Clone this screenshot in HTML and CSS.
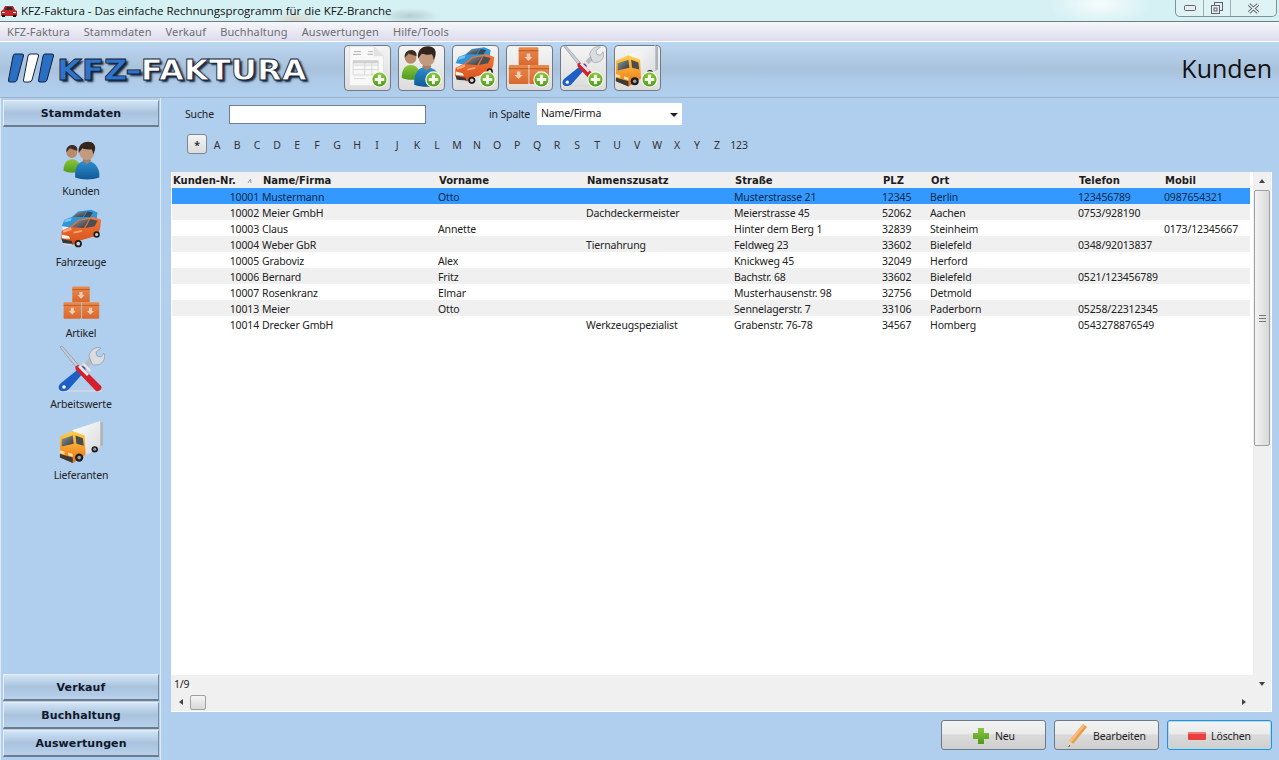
FILE: index.html
```html
<!DOCTYPE html>
<html lang="de">
<head>
    <meta charset="UTF-8">
    <title>KFZ-Faktura - Kunden</title>
    <link rel="stylesheet" href="styles.css">
</head>
<body>
    <svg class="defs" width="0" height="0">
        <defs>
            <linearGradient id="gBlue" x1="0" y1="0" x2="0" y2="1"><stop offset="0" stop-color="#2f8fd0"/><stop offset="1" stop-color="#0f5a96"/></linearGradient>
            <linearGradient id="gGreen" x1="0" y1="0" x2="0" y2="1"><stop offset="0" stop-color="#8cc63f"/><stop offset="1" stop-color="#4f9a1c"/></linearGradient>
            <linearGradient id="gOrange" x1="0" y1="0" x2="0" y2="1"><stop offset="0" stop-color="#f2793a"/><stop offset="1" stop-color="#d8501c"/></linearGradient>
            <linearGradient id="gCrate" x1="0" y1="0" x2="0" y2="1"><stop offset="0" stop-color="#e98a4e"/><stop offset="1" stop-color="#d9682c"/></linearGradient>
            <linearGradient id="gCab" x1="0" y1="0" x2="0" y2="1"><stop offset="0" stop-color="#fdd04a"/><stop offset=".5" stop-color="#f7a22e"/><stop offset="1" stop-color="#e8701c"/></linearGradient>
            <linearGradient id="gBox" x1="0" y1="0" x2="1" y2="1"><stop offset="0" stop-color="#fefefe"/><stop offset="1" stop-color="#d4d7da"/></linearGradient>
            <linearGradient id="gGlass" x1="0" y1="0" x2="1" y2="1"><stop offset="0" stop-color="#8d959c"/><stop offset="1" stop-color="#33373b"/></linearGradient>

            <symbol id="i-people" viewBox="0 0 48 48">
                <path d="M3 37c0-9 4-14 10-14s11 5 11 14c-6 3-15 3-21 0z" fill="url(#gGreen)"/>
                <circle cx="13" cy="15" r="6.500" fill="#b98a6c"/>
                <path d="M6.500 15c-1-6 3-9 7-9 4 0 7 3 6 7-3-1-7-2-9-3-1 2-3 3-4 5z" fill="#3f2d24"/>
                <path d="M17 45c-1-12 4-20 13-20s17 7 16 20c-8 3-21 3-29 0z" fill="url(#gBlue)"/>
                <path d="M26 25l5 4 5-4-1-3h-8z" fill="#a87f64"/>
                <circle cx="31" cy="15" r="9" fill="#c29a80"/>
                <path d="M21.500 16c-2-9 4-14 11-14 6 0 10 4 8 11-1 2-1 3-2 4 0-3-1-5-2-6-4 1-9 0-11-1-1 2-3 3-4 6z" fill="#33251e"/>
            </symbol>

            <symbol id="i-cars" viewBox="0 0 48 48">
                <path d="M3 21l3-7 8-3 7-6 14-2 7 3-1 8-24 9-10 1z" fill="#2f95d6"/>
                <path d="M15 11l6-5 9-1-4 6z" fill="url(#gGlass)"/>
                <path d="M31 5l6 1-3 5-7 0z" fill="#3a4650"/>
                <path d="M6 14l8-2-1 3-7 2z" fill="#7cc4ee"/>
                <path d="M3 21l8 1 3 2-9 1z" fill="#eef6fb"/>
                <path d="M2 34l1-8 10-5 8-7 17-3 8 3-1 9-3 8-21 6-4 4-12-2z" fill="url(#gOrange)"/>
                <path d="M14 22l8-7 11-2-6 10z" fill="url(#gGlass)"/>
                <path d="M34 13l8 2-3 6-10 2z" fill="#4a4f54"/>
                <path d="M4 26l9-4 1 3-9 3zM16 27l9-2 0 2-9 2z" fill="#f8a77c"/>
                <path d="M3 30l8 2 1 3-9-1z" fill="#f7f2ea"/>
                <path d="M3 35l11 2 1 4-11-2z" fill="#33363a"/>
                <path d="M5 40h9v2H7z" fill="#d8d8d8"/>
                <circle cx="21" cy="40" r="4" fill="#1e1e1e"/><circle cx="21" cy="40" r="2" fill="#d4d4d4"/>
                <circle cx="41" cy="30" r="3.500" fill="#1e1e1e"/><circle cx="41" cy="30" r="1.700" fill="#d4d4d4"/>
            </symbol>

            <symbol id="i-boxes" viewBox="0 0 48 48">
                <rect x="13" y="3" width="22" height="20" rx="1" fill="url(#gCrate)"/>
                <rect x="2" y="23" width="22" height="21" rx="1" fill="url(#gCrate)"/>
                <rect x="25" y="23" width="22" height="21" rx="1" fill="url(#gCrate)"/>
                <path d="M13 7h22M2 27h22M25 27h22" stroke="#b8531a" fill="none"/>
                <path d="M22 10h4v4h2.500L24 18.500 19.500 14H22zM11 30h4v4h2.500L13 38.500 8.500 34H11zM34 30h4v4h2.500L36 38.500 31.500 34H34z" fill="#f3cdb6"/>
            </symbol>

            <symbol id="i-tools" viewBox="0 0 48 48">
                <path d="M3 46h42" stroke="#d5d8dc" stroke-width="1.500"/>
                <path d="M3 2l2-1 20 23-3 2z" fill="#c9ced4" stroke="#7f8790" stroke-width=".6"/>
                <path d="M35 14L20 30" stroke="#b9bec4" stroke-width="5"/>
                <path d="M32 11c1-6 7-10 12-8l-5 4 1 4 4 1 3-4c2 5-1 12-8 12-2 0-3 0-4-1z" fill="#d9dde1" stroke="#858c94" stroke-width=".6"/>
                <path d="M24 22c2-2 6 1 4 4L12 44c-3 3-9 3-10 0-1-2 0-4 2-6z" fill="#1f5fc4"/>
                <circle cx="7" cy="42" r="1.800" fill="#fff"/>
                <path d="M19 25c-2-3 1-6 4-4l2 1 19 19c2 3-2 6-5 5l-2-2z" fill="#d5202c"/>
                <path d="M21 22l9 9 2-2-9-9zM25 19l8 8 1-2-7-7z" fill="#f3e6e6"/>
            </symbol>

            <symbol id="i-truck" viewBox="0 0 48 48">
                <path d="M15 11L45 1l3 2v25L28 39l-13-9z" fill="url(#gBox)"/>
                <path d="M45 1l3 2v25l-3 1.500z" fill="#b0b4b8"/>
                <circle cx="39" cy="32" r="3.500" fill="#1e1e1e"/><circle cx="39" cy="32" r="1.600" fill="#a0a0a0"/>
                <path d="M1 18l14-6 13 5 1 21-14 9-14-6z" fill="url(#gCab)"/>
                <path d="M3 21l12-4 1 9-13 3z" fill="url(#gGlass)"/>
                <path d="M18 17l8 3 1 8-8-2z" fill="#4a4d50"/>
                <path d="M1 33l5 1.500v3L1 36zM10 35.500l5 1.500v3l-5-1.500z" fill="#ffe6a0"/>
                <path d="M1 37l14 4v6L1 41z" fill="#3a3a3a"/>
                <circle cx="22" cy="41" r="4.500" fill="#1e1e1e"/><circle cx="22" cy="41" r="2" fill="#a0a0a0"/>
            </symbol>

            <symbol id="i-doc" viewBox="0 0 48 48">
                <path d="M5 2h27l11 11v33H5z" fill="#f8f8f8" stroke="#e0e0e0"/>
                <path d="M32 2l11 11H32z" fill="#e2e2e2"/>
                <path d="M10 8h8M26 8h5M9 11h9M25 11h6" stroke="#a8a8a8"/>
                <path d="M9 18h28v16H9zM9 23h28M9 28h28M22 18v16M30 18v16" stroke="#d6d6d6" fill="none"/>
                <rect x="9" y="18" width="28" height="3" fill="#d0d0d0"/>
                <path d="M10 38h13" stroke="#dadada"/>
            </symbol>

            <symbol id="i-badge" viewBox="0 0 16 16">
                <circle cx="8" cy="8" r="7.800" fill="#f4f8ee"/>
                <circle cx="8" cy="8" r="6.600" fill="url(#gGreen)"/>
                <path d="M6.500 3.500h3v3h3v3h-3v3h-3v-3h-3v-3h3z" fill="#f2f8ea"/>
            </symbol>
        </defs>
    </svg>

    <div class="titlebar">
        <svg class="title-icon" width="16" height="12" viewBox="0 0 16 12"><path d="M0 6l2-1 2-4h8l2 4 2 1v5H0z" fill="#c0272d"/><path d="M4 5l1.500-3h5L12 5z" fill="#2b2b2b"/><rect x="1" y="10" width="3" height="2" fill="#111"/><rect x="12" y="10" width="3" height="2" fill="#111"/><path d="M1 7h3v1H1zM12 7h3v1h-3z" fill="#ffe9a8"/></svg>
        <span class="title-text">KFZ-Faktura - Das einfache Rechnungsprogramm für die KFZ-Branche</span>
        <div class="win-controls">
            <div class="win-btn win-min"><svg width="12" height="6" viewBox="0 0 12 6"><rect x=".5" y=".5" width="11" height="5" rx="1" fill="#e8eef0" stroke="#5b6670"/></svg></div>
            <div class="win-btn win-max"><svg width="12" height="12" viewBox="0 0 12 12"><rect x="3.500" y=".5" width="8" height="8" fill="#e8eef0" stroke="#5b6670"/><rect x=".5" y="3.500" width="8" height="8" fill="#e8eef0" stroke="#5b6670"/><rect x="3" y="6" width="3" height="3" fill="none" stroke="#5b6670"/></svg></div>
            <div class="win-btn win-close"><svg width="13" height="11" viewBox="0 0 13 11"><path d="M2 1.500L11 9.500M11 1.500L2 9.500" stroke="#5b6670" stroke-width="3.400"/><path d="M2 1.500L11 9.500M11 1.500L2 9.500" stroke="#eef2f4" stroke-width="1.600"/></svg></div>
        </div>
    </div>

    <div class="menubar">
        <span>KFZ-Faktura</span>
        <span>Stammdaten</span>
        <span>Verkauf</span>
        <span>Buchhaltung</span>
        <span>Auswertungen</span>
        <span>Hilfe/Tools</span>
    </div>

    <div class="toolbar">
        <div class="logo">
            <svg class="logo-stripes" width="46" height="30" viewBox="0 0 46 30">
                <path d="M7 1h7q2 0 1.500 2L9 27q-.5 2-3 2H2q-2 0-1.500-2L5 3q.5-2 2-2z" fill="#2b6fc4" stroke="#10233f"/>
                <path d="M22 1h7q2 0 1.500 2L24 27q-.5 2-3 2h-4q-2 0-1.500-2L20 3q.5-2 2-2z" fill="#fff" stroke="#10233f"/>
                <path d="M37 1h7q2 0 1.500 2L39 27q-.5 2-3 2h-4q-2 0-1.500-2L35 3q.5-2 2-2z" fill="#2b6fc4" stroke="#10233f"/>
            </svg>
            <div class="logo-text"><span class="logo-blue">KFZ<span class="logo-dash">-</span></span><span class="logo-white">FAKTURA</span></div>
        </div>
        <div class="tool-buttons">
            <div class="tool-btn"><svg class="tool-icon" width="44" height="44"><use href="#i-doc"/></svg><svg class="tool-badge" width="17" height="17"><use href="#i-badge"/></svg></div>
            <div class="tool-btn"><svg class="tool-icon" width="44" height="44"><use href="#i-people"/></svg><svg class="tool-badge" width="17" height="17"><use href="#i-badge"/></svg></div>
            <div class="tool-btn"><svg class="tool-icon" width="44" height="44"><use href="#i-cars"/></svg><svg class="tool-badge" width="17" height="17"><use href="#i-badge"/></svg></div>
            <div class="tool-btn"><svg class="tool-icon" width="44" height="44"><use href="#i-boxes"/></svg><svg class="tool-badge" width="17" height="17"><use href="#i-badge"/></svg></div>
            <div class="tool-btn"><svg class="tool-icon" width="44" height="44"><use href="#i-tools"/></svg><svg class="tool-badge" width="17" height="17"><use href="#i-badge"/></svg></div>
            <div class="tool-btn"><svg class="tool-icon" width="44" height="44"><use href="#i-truck"/></svg><svg class="tool-badge" width="17" height="17"><use href="#i-badge"/></svg></div>
        </div>
        <div class="page-title">Kunden</div>
    </div>

    <div class="content">
        <div class="sidebar">
            <div class="side-head">Stammdaten</div>
            <div class="side-items">
                <div class="side-item"><svg width="40" height="40"><use href="#i-people"/></svg><span>Kunden</span></div>
                <div class="side-item"><svg width="44" height="44"><use href="#i-cars"/></svg><span>Fahrzeuge</span></div>
                <div class="side-item"><svg width="38" height="38"><use href="#i-boxes"/></svg><span>Artikel</span></div>
                <div class="side-item"><svg width="48" height="48"><use href="#i-tools"/></svg><span>Arbeitswerte</span></div>
                <div class="side-item"><svg width="44" height="44"><use href="#i-truck"/></svg><span>Lieferanten</span></div>
            </div>
            <div class="side-head">Verkauf</div>
            <div class="side-head">Buchhaltung</div>
            <div class="side-head">Auswertungen</div>
        </div>

        <div class="main">
            <div class="search-row">
                <label class="search-label">Suche</label>
                <input class="search-input" type="text">
                <label class="column-label">in Spalte</label>
                <div class="column-select">Name/Firma<span class="select-arrow"></span></div>
            </div>

            <div class="alpha-row">
                <span class="alpha-all">*</span>
                <span>A</span><span>B</span><span>C</span><span>D</span><span>E</span><span>F</span><span>G</span><span>H</span><span>I</span><span>J</span><span>K</span><span>L</span><span>M</span><span>N</span><span>O</span><span>P</span><span>Q</span><span>R</span><span>S</span><span>T</span><span>U</span><span>V</span><span>W</span><span>X</span><span>Y</span><span>Z</span><span class="alpha-num">123</span>
            </div>

            <div class="panel">
                <div class="panel-top">
                    <div class="table-wrap">
                        <table class="grid">
                            <colgroup>
                                <col class="c-nr"><col class="c-name"><col class="c-first"><col class="c-extra"><col class="c-street"><col class="c-zip"><col class="c-city"><col class="c-phone"><col class="c-mobile">
                            </colgroup>
                            <thead>
                                <tr>
                                    <th class="th-nr">Kunden-Nr.<svg class="sort-mark" width="5" height="6" viewBox="0 0 5 6"><path d="M1 5L3.500 1l.5 4" fill="none" stroke="#9a9a9a"/></svg></th>
                                    <th>Name/Firma</th><th>Vorname</th><th>Namenszusatz</th><th>Straße</th><th>PLZ</th><th>Ort</th><th>Telefon</th><th>Mobil</th>
                                </tr>
                            </thead>
                            <tbody>
                                <tr class="selected"><td class="nr">10001</td><td>Mustermann</td><td>Otto</td><td></td><td>Musterstrasse 21</td><td>12345</td><td>Berlin</td><td>123456789</td><td>0987654321</td></tr>
                                <tr class="alt"><td class="nr">10002</td><td>Meier GmbH</td><td></td><td>Dachdeckermeister</td><td>Meierstrasse 45</td><td>52062</td><td>Aachen</td><td>0753/928190</td><td></td></tr>
                                <tr><td class="nr">10003</td><td>Claus</td><td>Annette</td><td></td><td>Hinter dem Berg 1</td><td>32839</td><td>Steinheim</td><td></td><td>0173/12345667</td></tr>
                                <tr class="alt"><td class="nr">10004</td><td>Weber GbR</td><td></td><td>Tiernahrung</td><td>Feldweg 23</td><td>33602</td><td>Bielefeld</td><td>0348/92013837</td><td></td></tr>
                                <tr><td class="nr">10005</td><td>Graboviz</td><td>Alex</td><td></td><td>Knickweg 45</td><td>32049</td><td>Herford</td><td></td><td></td></tr>
                                <tr class="alt"><td class="nr">10006</td><td>Bernard</td><td>Fritz</td><td></td><td>Bachstr. 68</td><td>33602</td><td>Bielefeld</td><td>0521/123456789</td><td></td></tr>
                                <tr><td class="nr">10007</td><td>Rosenkranz</td><td>Elmar</td><td></td><td>Musterhausenstr. 98</td><td>32756</td><td>Detmold</td><td></td><td></td></tr>
                                <tr class="alt"><td class="nr">10013</td><td>Meier</td><td>Otto</td><td></td><td>Sennelagerstr. 7</td><td>33106</td><td>Paderborn</td><td>05258/22312345</td><td></td></tr>
                                <tr><td class="nr">10014</td><td>Drecker GmbH</td><td></td><td>Werkzeugspezialist</td><td>Grabenstr. 76-78</td><td>34567</td><td>Homberg</td><td>0543278876549</td><td></td></tr>
                            </tbody>
                        </table>
                        <div class="count-row">1/9</div>
                    </div>
                    <div class="vscroll">
                        <div class="scroll-arrow arrow-up"></div>
                        <div class="vthumb"><span class="grip"></span></div>
                        <div class="vspace"></div>
                        <div class="scroll-arrow arrow-down"></div>
                    </div>
                </div>
                <div class="hscroll">
                    <div class="scroll-arrow arrow-left"></div>
                    <div class="hthumb"></div>
                    <div class="hspace"></div>
                    <div class="scroll-arrow arrow-right"></div>
                </div>
            </div>

            <div class="actions">
                <button class="action">
                    <svg width="18" height="18" viewBox="0 0 18 18"><path d="M6 1h6v5h5v6h-5v5H6v-5H1V6h5z" fill="url(#gGreen)"/></svg>Neu
                </button>
                <button class="action">
                    <svg width="21" height="25" viewBox="0 0 21 25"><path d="M16 1l4 3L6 21l-4-3z" fill="#eb9a45"/><path d="M16 1l2 1.500L4 20l-2-2z" fill="#f6bd7c"/><path d="M2 18l4 3-5 3z" fill="#e9d5b8"/><path d="M1 24l1.500-2 1 1z" fill="#333"/></svg>Bearbeiten
                </button>
                <button class="action action-focus">
                    <svg width="18" height="8" viewBox="0 0 18 8"><rect width="18" height="8" rx="1" fill="#e84040"/><rect width="18" height="2" fill="#f47a7a"/></svg>Löschen
                </button>
            </div>
        </div>
    </div>
</body>
</html>
```
FILE: styles.css
```css
* {
    box-sizing: border-box;
}

html, body {
    margin: 0;
    height: 100%;
    overflow: hidden;
}

body {
    display: flex;
    flex-direction: column;
    font-family: "Noto Sans", sans-serif;
    font-size: 10.5px;
    letter-spacing: -0.15px;
    color: #222;
    background: #b0cfee;
}

.defs {
    display: block;
    height: 0;
}

/* window frame */
.titlebar {
    height: 22px;
    display: flex;
    align-items: center;
    padding-left: 1px;
    border-bottom: 1px solid #6f7d80;
    background:
        radial-gradient(ellipse 24px 8px at 295px 20px, rgba(230, 140, 110, 0.3), transparent),
        radial-gradient(ellipse 30px 8px at 410px 16px, rgba(110, 120, 130, 0.3), transparent),
        radial-gradient(ellipse 50px 20px at 1100px 4px, rgba(255, 255, 255, 0.8), transparent),
        #d6f1f4;
}

.title-icon {
    margin-right: 4px;
}

.title-text {
    font-family: "Open Sans", sans-serif;
    font-size: 11.5px;
    letter-spacing: 0;
    color: #111;
}

.win-controls {
    margin-left: auto;
    margin-right: 2px;
    margin-bottom: 4px;
    width: 102px;
    height: 17px;
    display: flex;
    border: 1px solid #7e9193;
    border-top: none;
    border-radius: 0 0 5px 5px;
    background: #dff3f5;
}

.win-btn {
    display: flex;
    align-items: center;
    justify-content: center;
}

.win-min {
    width: 28px;
    border-right: 1px solid #9fb0b2;
}

.win-max {
    width: 27px;
    border-right: 1px solid #9fb0b2;
}

.win-close {
    flex: 1;
}

.menubar {
    height: 20px;
    display: flex;
    align-items: center;
    gap: 14px;
    padding-left: 7px;
    font-size: 11px;
    letter-spacing: 0.12px;
    color: #6e6e6e;
    background: linear-gradient(#f6f6fa, #dcdcee);
    border-bottom: 1px solid #fff;
}

.toolbar {
    height: 56px;
    flex: none;
    display: flex;
    align-items: center;
    padding: 0 7px 4px 8px;
    border-bottom: 1px solid #9fb3c7;
    background: linear-gradient(#bcd7f2 0%, #a9c2dc 50%, #aecbe9 70%, #b0cfee 100%);
}

/* logo */
.logo {
    width: 336px;
    display: flex;
    align-items: center;
    gap: 3px;
}

.logo-text {
    margin-top: 5px;
    font-family: "DejaVu Sans", sans-serif;
    font-size: 29px;
    font-weight: bold;
    letter-spacing: 0;
    line-height: 30px;
    white-space: nowrap;
    text-shadow: 2px 2px 2px #12233a;
    -webkit-text-stroke: 0.8px #12233a;
    transform: scaleX(1.11);
    transform-origin: left center;
}

.logo-blue {
    color: #2f74cc;
}

.logo-white {
    color: #fff;
}

.logo-dash {
    display: inline-block;
    transform: scaleX(1.3);
}

.tool-buttons {
    display: flex;
    gap: 7px;
}

.tool-btn {
    position: relative;
    width: 47px;
    height: 46px;
    display: flex;
    align-items: center;
    justify-content: center;
    border: 1px solid #6f7a86;
    border-radius: 4px;
    background: linear-gradient(#f4f4f4, #dcdcdc);
}

.tool-icon {
    margin: -3px 2px 0 0;
}

.tool-badge {
    position: absolute;
    right: 2px;
    bottom: 2px;
}

.page-title {
    margin-left: auto;
    font-family: "Open Sans", sans-serif;
    font-size: 25px;
    letter-spacing: 0;
    color: #111;
}

/* content */
.content {
    flex: 1;
    display: flex;
    min-height: 0;
}

.sidebar {
    width: 161px;
    display: flex;
    flex-direction: column;
    gap: 1px;
    padding: 2px 1px 3px 2px;
    border-right: 1px solid #dfe9f3;
    border-left: 1px solid #dfe9f3;
}

.side-head {
    height: 27px;
    flex: none;
    display: flex;
    align-items: center;
    justify-content: center;
    font-family: "DejaVu Sans", sans-serif;
    font-size: 11px;
    font-weight: bold;
    letter-spacing: 0.1px;
    color: #10182a;
    border: 1px solid #e6eef6;
    border-right-color: #7d8a97;
    border-bottom: 2px solid #6f7c88;
    background: linear-gradient(#d3e4f5, #a9c3de 50%, #b7d1ec);
}

.side-items {
    flex: 1;
    display: flex;
    flex-direction: column;
}

.side-item {
    height: 71px;
    display: flex;
    flex-direction: column;
    align-items: center;
    justify-content: flex-end;
    gap: 4px;
    padding-bottom: 1px;
}

/* main column */
.main {
    flex: 1;
    min-width: 0;
    display: flex;
    flex-direction: column;
    padding: 5px 7px 10px 10px;
}

.search-row {
    height: 22px;
    display: flex;
    align-items: center;
    padding-left: 14px;
}

.search-label {
    width: 44px;
}

.search-input {
    width: 197px;
    height: 19px;
    border: 1px solid #6e7f92;
    background: #fff;
    padding: 0;
}

.column-label {
    margin-left: 63px;
    width: 48px;
}

.column-select {
    position: relative;
    width: 145px;
    height: 22px;
    line-height: 21px;
    padding-left: 4px;
    background: #fff;
}

.select-arrow {
    position: absolute;
    right: 4px;
    top: 10px;
    border: 4px solid transparent;
    border-top-color: #222;
    border-bottom: none;
}

.alpha-row {
    display: flex;
    align-items: center;
    height: 20px;
    margin-top: 9px;
    padding-left: 16px;
    color: #333;
}

.alpha-row span {
    width: 20px;
    padding-top: 1px;
    text-align: center;
}

.alpha-row .alpha-all {
    height: 20px;
    padding-top: 0;
    line-height: 20px;
    font-weight: bold;
    border: 1px solid #7c8794;
    border-radius: 3px;
    background: linear-gradient(#f4f4f4, #dcdcdc);
}

.alpha-row .alpha-num {
    width: 24px;
}

.panel {
    flex: 1;
    min-height: 0;
    display: flex;
    flex-direction: column;
    margin-top: 18px;
    background: #f0f0f0;
    border-bottom: 1px solid #fff;
    border-right: 1px solid #fff;
}

.panel-top {
    flex: 1;
    min-height: 0;
    display: flex;
}

.table-wrap {
    flex: 1;
    min-width: 0;
    display: flex;
    flex-direction: column;
    background: #fff;
}

.grid {
    width: 1078px;
    margin-left: 1px;
    flex: none;
    table-layout: fixed;
    border-collapse: collapse;
}

.c-nr { width: 87px; }
.c-name { width: 176px; }
.c-first { width: 148px; }
.c-extra { width: 148px; }
.c-street { width: 148px; }
.c-zip { width: 48px; }
.c-city { width: 148px; }
.c-phone { width: 86px; }

.grid th {
    height: 16px;
    padding: 2px 0 0 4px;
    text-align: left;
    font-family: "DejaVu Sans", sans-serif;
    font-size: 10px;
    font-weight: bold;
    letter-spacing: 0;
    line-height: 14px;
    color: #1c1c1c;
    background: #f0f0f0;
    white-space: nowrap;
}

.grid .th-nr {
    padding-left: 1px;
}

.sort-mark {
    margin-left: 11px;
}

.grid td {
    height: 16px;
    padding: 2px 0 0 3px;
    white-space: nowrap;
    overflow: hidden;
    line-height: 14px;
}

.grid td.nr {
    padding-left: 0;
    text-align: right;
}

.grid tr.alt td {
    background: #f0f0f0;
}

.grid tr.selected td {
    background: #3399ff;
    color: #0f2a4a;
}

.count-row {
    margin-top: auto;
    height: 18px;
    line-height: 18px;
    padding-left: 3px;
    background: #f0f0f0;
}

/* scrollbars */
.vscroll {
    width: 18px;
    flex: none;
    display: flex;
    flex-direction: column;
    background: #f0f0f0;
}

.scroll-arrow {
    flex: none;
    display: flex;
    align-items: center;
    justify-content: center;
    width: 18px;
    height: 18px;
}

.scroll-arrow::before {
    content: "";
    border: 3px solid transparent;
}

.arrow-up::before {
    border-top: none;
    border-bottom: 4px solid #444;
}

.arrow-down::before {
    border-bottom: none;
    border-top: 4px solid #444;
}

.arrow-left::before {
    border-left: none;
    border-right: 4px solid #444;
}

.arrow-right::before {
    border-right: none;
    border-left: 4px solid #444;
}

.vthumb {
    height: 256px;
    margin: 0 1px;
    display: flex;
    align-items: center;
    justify-content: center;
    border: 1px solid #a0a0a0;
    border-radius: 2px;
    background: linear-gradient(90deg, #f4f4f4, #d8d8d8);
}

.grip {
    width: 7px;
    height: 7px;
    border-top: 1px solid #777;
    border-bottom: 1px solid #777;
    background: linear-gradient(#777, #777) center / 100% 1px no-repeat;
}

.vspace, .hspace {
    flex: 1;
}

.hscroll {
    height: 18px;
    flex: none;
    display: flex;
    align-items: center;
    padding-left: 1px;
    padding-right: 18px;
}

.hthumb {
    width: 16px;
    height: 15px;
    border: 1px solid #a0a0a0;
    border-radius: 2px;
    background: linear-gradient(#f4f4f4, #d8d8d8);
}

/* action buttons */
.actions {
    display: flex;
    justify-content: flex-end;
    gap: 8px;
    margin-top: 8px;
}

.action {
    width: 105px;
    height: 30px;
    display: flex;
    align-items: center;
    justify-content: center;
    gap: 5px;
    padding: 1px 0 0;
    font-family: "Noto Sans", sans-serif;
    font-size: 10.5px;
    letter-spacing: -0.15px;
    color: #222;
    border: 1px solid #6f7a86;
    border-radius: 3px;
    background: linear-gradient(#f3f3f3 0%, #ebebeb 45%, #dadada 50%, #cfcfcf 100%);
}

.action-focus {
    border-color: #2f8fc8;
    box-shadow: inset 0 0 0 1px #a8dcf5;
}
```
